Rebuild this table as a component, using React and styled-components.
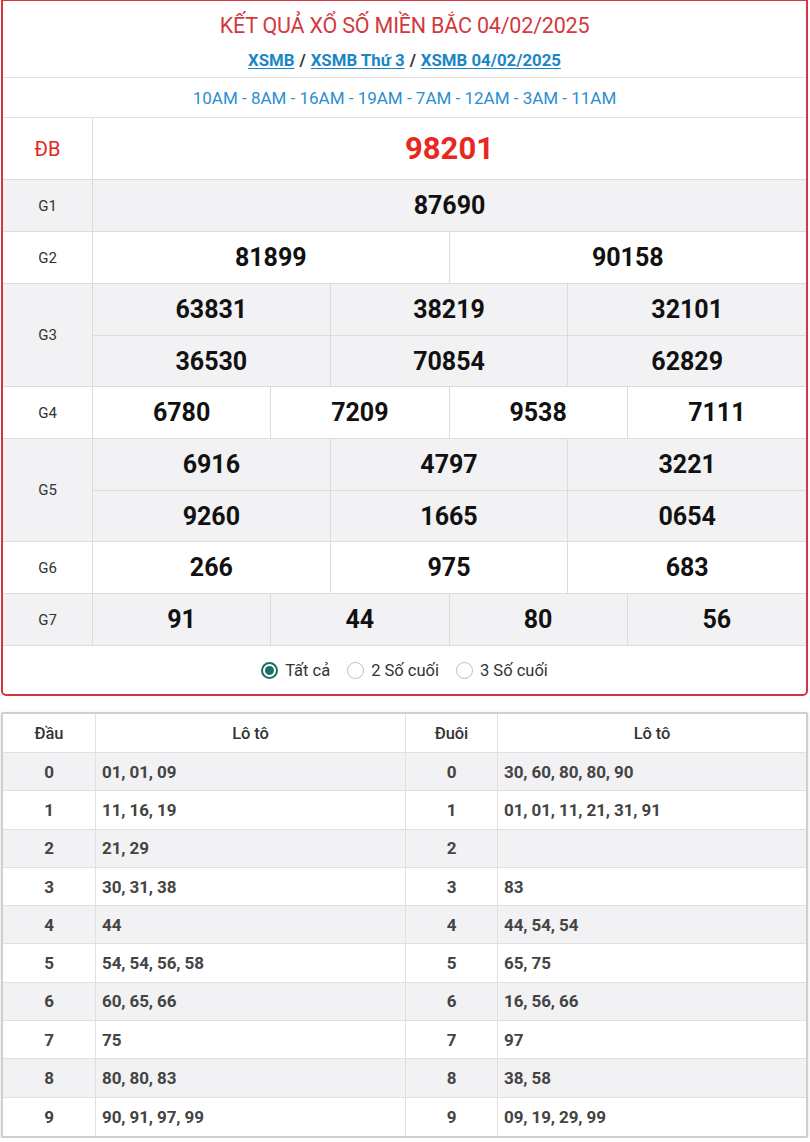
import React from "react";
import styled, { createGlobalStyle } from "styled-components";

const Global = createGlobalStyle`
  html, body { margin: 0; padding: 0; background: #fff; }
  body { font-family: Roboto, "Noto Sans", Arial, sans-serif; color: #222; }
  * { box-sizing: border-box; }
`;

const Page = styled.div`
  width: 810px;
  padding: 0 2px 0 1px;
  display: flex;
  flex-direction: column;
  gap: 16px;
`;

const ResultBox = styled.section`
  border: 2px solid #d8343e;
  border-top-width: 1px;
  border-radius: 0 0 5px 5px;
  overflow: hidden;
  background: #fff;
`;

const Header = styled.div`
  height: 77px;
  display: flex;
  flex-direction: column;
  align-items: center;
  padding-top: 11px;
  border-bottom: 1px solid #e2e2e2;
`;

const Title = styled.h1`
  margin: 0;
  font-size: 21.5px;
  font-weight: 400;
  color: #d33940;
  line-height: 28px;
  letter-spacing: -0.2px;
`;

const Crumbs = styled.div`
  margin-top: 9px;
  font-size: 16.8px;
  font-weight: 700;
  color: #333;
  line-height: 22px;
  display: flex;
  gap: 5px;
`;

const Crumb = styled.a`
  color: #1b86c6;
  text-decoration: underline;
  text-underline-offset: 2px;
`;

const Times = styled.div`
  height: 40px;
  display: flex;
  align-items: center;
  justify-content: center;
  font-size: 17px;
  color: #2a8ecf;
  border-bottom: 1px solid #e2e2e2;
`;

const PrizeRow = styled.div`
  display: grid;
  grid-template-columns: 90px 1fr;
  background: ${(p) => (p.$alt ? "#f2f1f3" : "#fff")};
  border-bottom: 1px solid #dcdcdc;
`;

const Label = styled.div`
  display: flex;
  align-items: center;
  justify-content: center;
  border-right: 1px solid #dcdcdc;
  font-size: ${(p) => (p.$special ? "20px" : "15px")};
  color: ${(p) => (p.$special ? "#e2261d" : "#333")};
`;

const Numbers = styled.div`
  display: grid;
  grid-template-columns: repeat(${(p) => p.$cols}, 1fr);
`;

const Num = styled.div`
  height: ${(p) => p.$h}px;
  display: flex;
  align-items: center;
  justify-content: center;
  font-weight: 700;
  font-size: ${(p) => (p.$special ? "31px" : "25px")};
  color: ${(p) => (p.$special ? "#e8281e" : "#111")};
  border-right: ${(p) => (p.$last ? "none" : "1px solid #dcdcdc")};
  border-top: ${(p) => (p.$top ? "1px solid #dcdcdc" : "none")};
`;

const Filter = styled.div`
  height: 48px;
  display: flex;
  align-items: center;
  justify-content: center;
  gap: 17px;
  font-size: 16.5px;
  color: #333;
`;

const Option = styled.label`
  display: flex;
  align-items: center;
  gap: 7px;
`;

const Radio = styled.span`
  width: 17px;
  height: 17px;
  border-radius: 50%;
  border: ${(p) => (p.$on ? "2px solid #1b6f66" : "1.5px solid #bdbdbd")};
  display: flex;
  align-items: center;
  justify-content: center;
  &::after {
    content: "";
    width: 9px;
    height: 9px;
    border-radius: 50%;
    background: ${(p) => (p.$on ? "#1b6f66" : "transparent")};
  }
`;

const LotoTable = styled.section`
  border: 2px solid #cfcfcf;
  border-radius: 2px;
  box-shadow: 0 1px 3px rgba(0, 0, 0, 0.15);
  background: #fff;
`;

const LotoRow = styled.div`
  display: grid;
  grid-template-columns: 93px 310px 92px 1fr;
  height: ${(p) => (p.$head ? "39px" : "38.3px")};
  background: ${(p) => (p.$alt ? "#f2f1f3" : "#fff")};
  border-bottom: ${(p) => (p.$lastRow ? "none" : "1px solid #e0e0e0")};
`;

const Cell = styled.div`
  display: flex;
  align-items: center;
  justify-content: ${(p) => (p.$left ? "flex-start" : "center")};
  padding-left: ${(p) => (p.$left ? "6px" : "0")};
  font-size: ${(p) => (p.$head ? "16.5px" : "17px")};
  font-weight: ${(p) => (p.$head ? 500 : 700)};
  color: ${(p) => (p.$head ? "#333" : "#444")};
  letter-spacing: -0.1px;
  border-right: ${(p) => (p.$end ? "none" : "1px solid #e0e0e0")};
`;

const prizes = [
  { label: "ĐB", special: true, cols: 1, rows: [["98201"]], h: 61 },
  { label: "G1", cols: 1, rows: [["87690"]], h: 51 },
  { label: "G2", cols: 2, rows: [["81899", "90158"]], h: 51 },
  { label: "G3", cols: 3, rows: [["63831", "38219", "32101"], ["36530", "70854", "62829"]], h: 51 },
  { label: "G4", cols: 4, rows: [["6780", "7209", "9538", "7111"]], h: 51 },
  { label: "G5", cols: 3, rows: [["6916", "4797", "3221"], ["9260", "1665", "0654"]], h: 51 },
  { label: "G6", cols: 3, rows: [["266", "975", "683"]], h: 51 },
  { label: "G7", cols: 4, rows: [["91", "44", "80", "56"]], h: 51 },
];

const loto = [
  ["0", "01, 01, 09", "0", "30, 60, 80, 80, 90"],
  ["1", "11, 16, 19", "1", "01, 01, 11, 21, 31, 91"],
  ["2", "21, 29", "2", ""],
  ["3", "30, 31, 38", "3", "83"],
  ["4", "44", "4", "44, 54, 54"],
  ["5", "54, 54, 56, 58", "5", "65, 75"],
  ["6", "60, 65, 66", "6", "16, 56, 66"],
  ["7", "75", "7", "97"],
  ["8", "80, 80, 83", "8", "38, 58"],
  ["9", "90, 91, 97, 99", "9", "09, 19, 29, 99"],
];

export default function App() {
  return (
    <>
      <Global />
      <Page>
        <ResultBox>
          <Header>
            <Title>KẾT QUẢ XỔ SỐ MIỀN BẮC 04/02/2025</Title>
            <Crumbs>
              <Crumb>XSMB</Crumb>/<Crumb>XSMB Thứ 3</Crumb>/<Crumb>XSMB 04/02/2025</Crumb>
            </Crumbs>
          </Header>
          <Times>10AM - 8AM - 16AM - 19AM - 7AM - 12AM - 3AM - 11AM</Times>
          {prizes.map((p, i) => (
            <PrizeRow key={p.label} $alt={i % 2 === 1}>
              <Label $special={p.special}>{p.label}</Label>
              <Numbers $cols={p.cols}>
                {p.rows.map((r, ri) =>
                  r.map((n, ci) => (
                    <Num
                      key={`${ri}-${ci}`}
                      $h={p.h}
                      $special={p.special}
                      $last={ci === r.length - 1}
                      $top={ri > 0}
                    >
                      {n}
                    </Num>
                  ))
                )}
              </Numbers>
            </PrizeRow>
          ))}
          <Filter>
            <Option><Radio $on />Tất cả</Option>
            <Option><Radio />2 Số cuối</Option>
            <Option><Radio />3 Số cuối</Option>
          </Filter>
        </ResultBox>
        <LotoTable>
          <LotoRow $head>
            <Cell $head>Đầu</Cell>
            <Cell $head>Lô tô</Cell>
            <Cell $head>Đuôi</Cell>
            <Cell $head $end>Lô tô</Cell>
          </LotoRow>
          {loto.map((r, i) => (
            <LotoRow key={i} $alt={i % 2 === 0} $lastRow={i === loto.length - 1}>
              <Cell>{r[0]}</Cell>
              <Cell $left>{r[1]}</Cell>
              <Cell>{r[2]}</Cell>
              <Cell $left $end>{r[3]}</Cell>
            </LotoRow>
          ))}
        </LotoTable>
      </Page>
    </>
  );
}
